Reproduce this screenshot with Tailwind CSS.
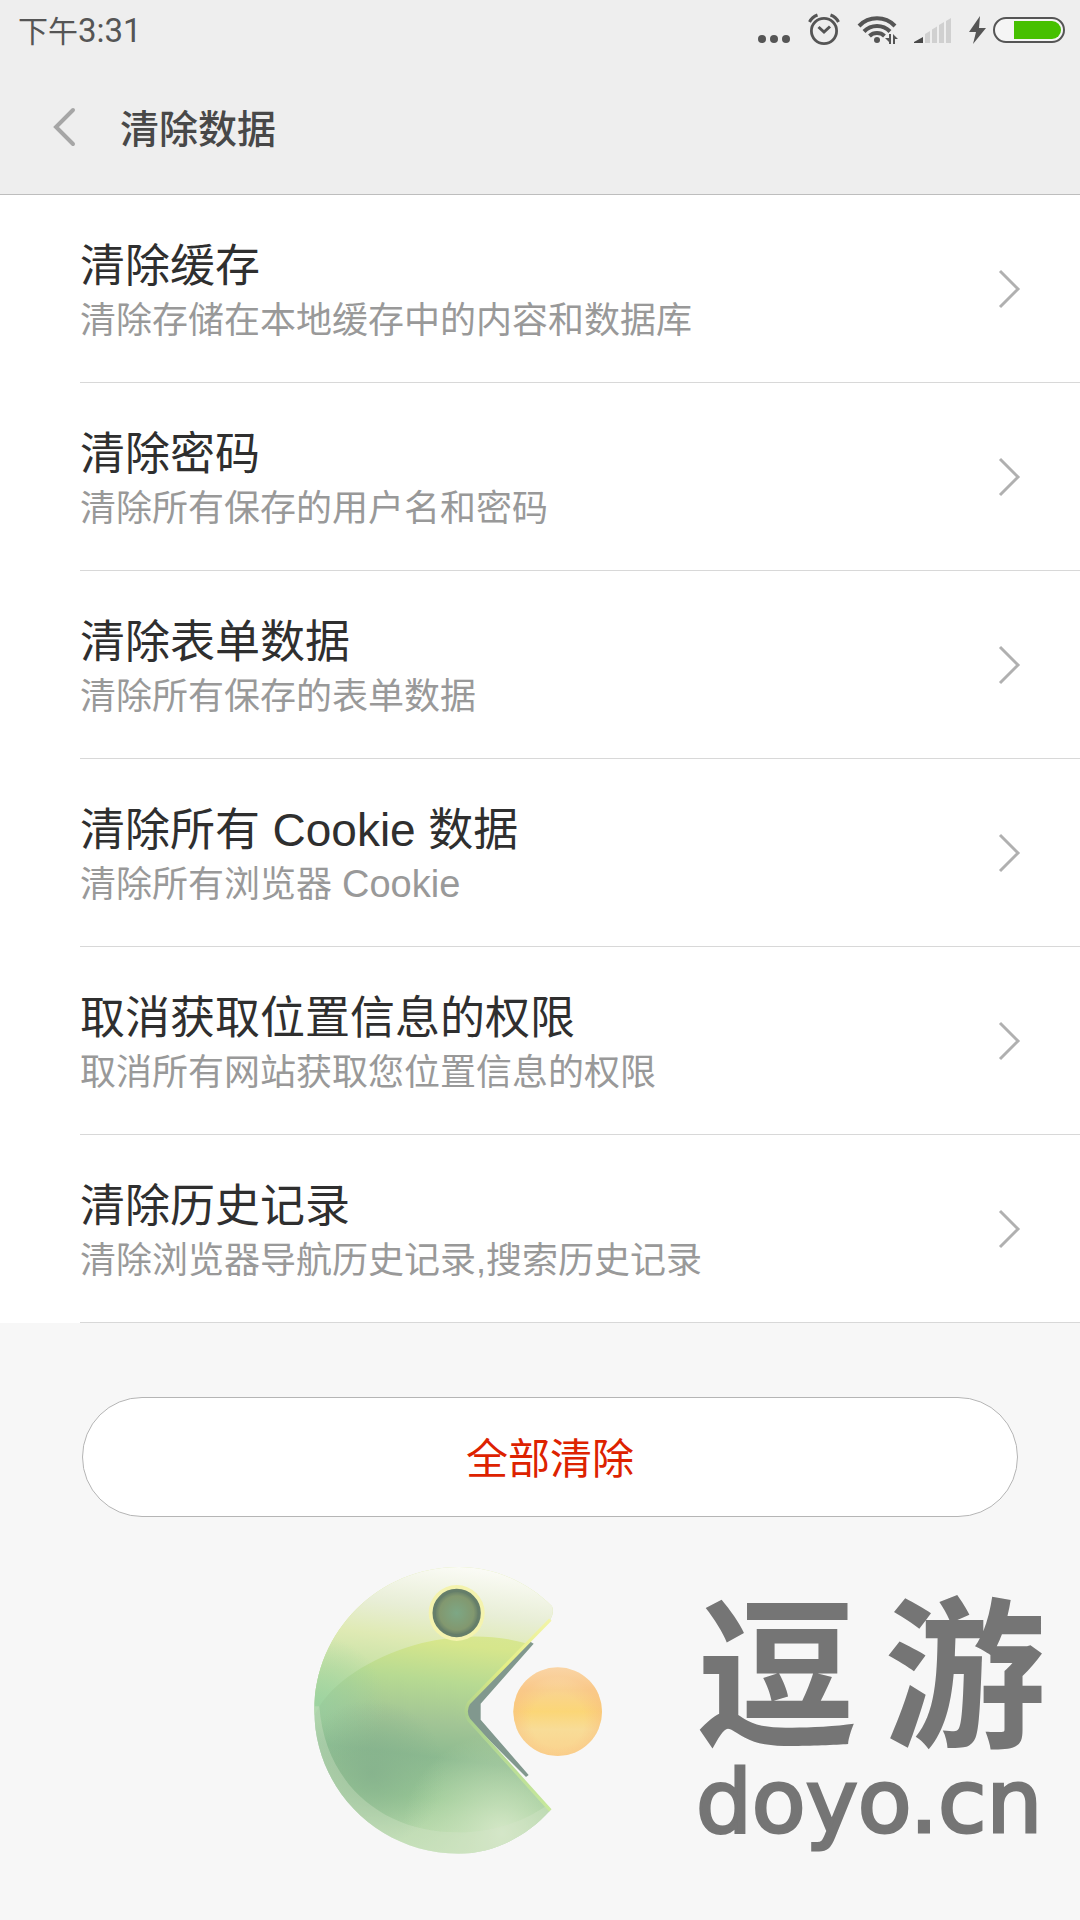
<!DOCTYPE html>
<html lang="zh-CN">
  <head>
    <meta charset="UTF-8" />
    <meta name="viewport" content="width=device-width, initial-scale=1.0" />
    <title>清除数据</title>
    <script src="https://cdn.jsdelivr.net/npm/@tailwindcss/browser@4"></script>
  </head>
  <body
    class="min-h-screen bg-[#f7f7f7] font-['Liberation_Sans','Noto_Sans_CJK_SC',sans-serif] text-[#2f2f2f]"
  >
    <header class="bg-[#eeeeee] border-b border-[#bdbdbd]">
      <!-- Status bar -->
      <div class="flex items-center justify-between h-[60px] pl-[18px] pr-3">
        <p class="pt-[2px] text-[30px] leading-[60px] text-[#555555]">
          下午<span class="font-[Roboto] text-[33px]">3:31</span>
        </p>

        <div class="flex gap-[14px] text-[#555555]">
          <svg width="36" height="60" viewBox="0 0 36 60" fill="currentColor">
            <circle cx="6" cy="39" r="4" />
            <circle cx="18" cy="39" r="4" />
            <circle cx="30" cy="39" r="4" />
          </svg>

          <svg
            width="36"
            height="60"
            viewBox="0 0 36 60"
            fill="none"
            stroke="currentColor"
            stroke-width="3"
          >
            <circle cx="18" cy="31" r="12.6" stroke-width="2.8" />
            <path d="M3.5 22Q6 17 11.5 15M32.5 22Q30 17 24.5 15" />
            <path d="M12.5 27L18 32L24 26.5" />
          </svg>

          <svg
            width="42"
            height="60"
            viewBox="0 0 42 60"
            fill="none"
            stroke="currentColor"
            stroke-width="4"
          >
            <path d="M3 26A25 25 0 0 1 39 26" />
            <path d="M8 31.5A18 18 0 0 1 34 31.5" />
            <path d="M13.5 36A11 11 0 0 1 28.5 36" />
            <circle cx="21" cy="40" r="3" fill="currentColor" stroke="none" />
            <path
              d="M33 34h2v10h-2v-2l-4-4h4zM37 34l5 5h-3v5h-2z"
              fill="currentColor"
              stroke="none"
            />
          </svg>

          <svg width="40" height="60" viewBox="0 0 40 60" fill="#d0d0d0">
            <path d="M2 43v-1l9-5v6z" fill="#484848" />
            <path
              d="M13 43V34l5-3v12zM20 43V29.5l5-3V43zM27 43V25l5-3v21zM34 43V21l5-3v25z"
            />
          </svg>

          <svg width="102" height="60" viewBox="0 0 102 60">
            <path d="M14 16L3 32h7L7 44L20 28h-7z" fill="currentColor" />
            <rect
              x="28"
              y="18"
              width="70"
              height="24"
              rx="12"
              fill="#f5f5f5"
              stroke="currentColor"
              stroke-width="2"
            />
            <path d="M48 21h38a9 9 0 0 1 0 18H48z" fill="#46c001" />
          </svg>
        </div>
      </div>

      <!-- Title bar -->
      <div class="flex items-center gap-[43px] h-[134px] pl-[52px]">
        <button type="button" aria-label="返回">
          <svg
            width="25"
            height="42"
            viewBox="0 0 25 42"
            fill="none"
            stroke="#a6a6a6"
            stroke-width="4"
            stroke-linecap="round"
          >
            <path d="M21 4L4 21L21 38" />
          </svg>
        </button>
        <h1 class="pt-[6px] text-[39px] leading-[60px] font-medium text-[#484848]">
          清除数据
        </h1>
      </div>
    </header>

    <main>
      <ul class="bg-white pl-20">
        <li class="border-b border-[#d8d8d8]">
          <a href="#cache" class="flex items-center justify-between h-[187px] pr-[58px]">
            <div class="pt-1">
              <h2 class="text-[45px] leading-[60px]">清除缓存</h2>
              <p class="text-[36px] leading-[48px] text-[#999999]">
                清除存储在本地缓存中的内容和数据库
              </p>
            </div>
            <svg width="24" height="40" viewBox="0 0 24 40" fill="none" stroke="#b0b0b0" stroke-width="3">
              <path d="M2 2L20 20L2 38" />
            </svg>
          </a>
        </li>

        <li class="border-b border-[#d8d8d8]">
          <a href="#password" class="flex items-center justify-between h-[187px] pr-[58px]">
            <div class="pt-1">
              <h2 class="text-[45px] leading-[60px]">清除密码</h2>
              <p class="text-[36px] leading-[48px] text-[#999999]">
                清除所有保存的用户名和密码
              </p>
            </div>
            <svg width="24" height="40" viewBox="0 0 24 40" fill="none" stroke="#b0b0b0" stroke-width="3">
              <path d="M2 2L20 20L2 38" />
            </svg>
          </a>
        </li>

        <li class="border-b border-[#d8d8d8]">
          <a href="#form" class="flex items-center justify-between h-[187px] pr-[58px]">
            <div class="pt-1">
              <h2 class="text-[45px] leading-[60px]">清除表单数据</h2>
              <p class="text-[36px] leading-[48px] text-[#999999]">
                清除所有保存的表单数据
              </p>
            </div>
            <svg width="24" height="40" viewBox="0 0 24 40" fill="none" stroke="#b0b0b0" stroke-width="3">
              <path d="M2 2L20 20L2 38" />
            </svg>
          </a>
        </li>

        <li class="border-b border-[#d8d8d8]">
          <a href="#cookie" class="flex items-center justify-between h-[187px] pr-[58px]">
            <div class="pt-1">
              <h2 class="text-[45px] leading-[60px]">
                清除所有 <span class="text-[46px] leading-none">Cookie</span> 数据
              </h2>
              <p class="text-[36px] leading-[48px] text-[#999999]">
                清除所有浏览器 <span class="text-[38px] leading-none">Cookie</span>
              </p>
            </div>
            <svg width="24" height="40" viewBox="0 0 24 40" fill="none" stroke="#b0b0b0" stroke-width="3">
              <path d="M2 2L20 20L2 38" />
            </svg>
          </a>
        </li>

        <li class="border-b border-[#d8d8d8]">
          <a href="#location" class="flex items-center justify-between h-[187px] pr-[58px]">
            <div class="pt-1">
              <h2 class="text-[45px] leading-[60px]">取消获取位置信息的权限</h2>
              <p class="text-[36px] leading-[48px] text-[#999999]">
                取消所有网站获取您位置信息的权限
              </p>
            </div>
            <svg width="24" height="40" viewBox="0 0 24 40" fill="none" stroke="#b0b0b0" stroke-width="3">
              <path d="M2 2L20 20L2 38" />
            </svg>
          </a>
        </li>

        <li class="border-b border-[#d8d8d8]">
          <a href="#history" class="flex items-center justify-between h-[187px] pr-[58px]">
            <div class="pt-1">
              <h2 class="text-[45px] leading-[60px]">清除历史记录</h2>
              <p class="text-[36px] leading-[48px] text-[#999999]">
                清除浏览器导航历史记录,搜索历史记录
              </p>
            </div>
            <svg width="24" height="40" viewBox="0 0 24 40" fill="none" stroke="#b0b0b0" stroke-width="3">
              <path d="M2 2L20 20L2 38" />
            </svg>
          </a>
        </li>
      </ul>

      <div class="pt-[74px] pl-[82px] pr-[62px]">
        <button
          type="button"
          class="block w-full h-[120px] pt-1 rounded-full border border-[#b5b5b5] bg-white text-[42px] text-[#dd2200]"
        >
          全部清除
        </button>
      </div>
    </main>

    <footer class="flex justify-end gap-[90px] pt-[46px] pr-[34px]">
      <svg width="294" height="294" viewBox="70 70 882 882">
        <defs>
          <linearGradient id="body" x1="0.55" y1="0" x2="0.45" y2="1">
            <stop offset="0" stop-color="#dce9a8" />
            <stop offset="0.27" stop-color="#d6e68c" />
            <stop offset="0.4" stop-color="#b7da92" />
            <stop offset="0.54" stop-color="#a2c595" />
            <stop offset="0.66" stop-color="#8cba90" />
            <stop offset="0.8" stop-color="#9ac996" />
            <stop offset="0.92" stop-color="#b5d8aa" />
            <stop offset="1" stop-color="#bfdfb3" />
          </linearGradient>
          <linearGradient id="gloss" x1="0.6" y1="0" x2="0.4" y2="1">
            <stop offset="0" stop-color="#fcfcf8" />
            <stop offset="0.3" stop-color="#e8eed6" />
            <stop offset="0.5" stop-color="#dfeab4" />
            <stop offset="0.75" stop-color="#c4e0a4" />
            <stop offset="1" stop-color="#acd9a0" />
          </linearGradient>
          <radialGradient id="left" cx="90" cy="490" r="200" gradientUnits="userSpaceOnUse">
            <stop offset="0" stop-color="#96d0a0" stop-opacity="0.7" />
            <stop offset="1" stop-color="#96d0a0" stop-opacity="0" />
          </radialGradient>
          <radialGradient id="shade" cx="250" cy="700" r="220" gradientUnits="userSpaceOnUse">
            <stop offset="0" stop-color="#84b08c" stop-opacity="0.8" />
            <stop offset="1" stop-color="#84b08c" stop-opacity="0" />
          </radialGradient>
          <radialGradient id="glow" cx="640" cy="880" r="300" gradientUnits="userSpaceOnUse">
            <stop offset="0" stop-color="#d8e9cb" stop-opacity="0.9" />
            <stop offset="1" stop-color="#cbe3b8" stop-opacity="0" />
          </radialGradient>
          <linearGradient id="lip" x1="0" y1="0" x2="0" y2="1">
            <stop offset="0" stop-color="#f2f4a8" />
            <stop offset="0.25" stop-color="#e4ee84" />
            <stop offset="0.5" stop-color="#a9cf8d" />
            <stop offset="1" stop-color="#c8e99c" />
          </linearGradient>
          <radialGradient id="eye">
            <stop offset="0" stop-color="#7da785" />
            <stop offset="0.75" stop-color="#82986f" />
            <stop offset="1" stop-color="#617a68" />
          </radialGradient>
          <linearGradient id="ball" x1="0" y1="0" x2="0" y2="1">
            <stop offset="0" stop-color="#fbeccb" />
            <stop offset="0.25" stop-color="#f9d391" />
            <stop offset="0.5" stop-color="#fbd677" />
            <stop offset="0.7" stop-color="#f8dc97" />
            <stop offset="1" stop-color="#fad28d" />
          </linearGradient>
          <radialGradient id="ballEdge" cy="0.6">
            <stop offset="0.6" stop-color="#f9bd80" stop-opacity="0" />
            <stop offset="1" stop-color="#f9bd80" stop-opacity="0.5" />
          </radialGradient>
          <clipPath id="shape">
            <path
              d="M790 200C715 125 615 82 510 82C270 82 77 275 77 512C77 750 270 942 510 942C615 942 715 890 785 812L540 540Q525 515 540 490L785 240Q797 220 790 200Z"
            />
          </clipPath>
        </defs>

        <path
          d="M725 306L735 312L576 492V540L720 706L712 712L530 530V500Z"
          fill="#81988e"
        />
        <g clip-path="url(#shape)">
          <rect x="70" y="70" width="740" height="882" fill="url(#body)" />
          <path
            d="M70 70H810V350C690 285 540 275 400 310C270 345 150 410 92 500L70 540Z"
            fill="url(#gloss)"
          />
          <rect x="70" y="70" width="740" height="882" fill="url(#left)" />
          <rect x="70" y="70" width="740" height="882" fill="url(#shade)" />
          <rect x="70" y="70" width="740" height="882" fill="url(#glow)" />
          <path
            d="M92 500C110 740 290 880 510 878C620 876 710 845 785 790V952H70V500Z"
            fill="#d7e6ca"
            fill-opacity="0.35"
          />
        </g>
        <path
          d="M785 240L540 490Q525 515 540 540L785 812"
          fill="none"
          stroke="url(#lip)"
          stroke-width="10"
        />
        <circle cx="504" cy="220" r="84" fill="#f4f3ae" />
        <circle cx="504" cy="220" r="68" fill="url(#eye)" stroke="#657e6a" stroke-width="9" />
        <circle cx="807" cy="516" r="133" fill="url(#ball)" />
        <circle cx="807" cy="516" r="133" fill="url(#ballEdge)" />
      </svg>

      <div class="w-[350px] text-[#757575]">
        <p
          class="flex justify-between pt-[34px] text-[162px] leading-[164px] font-bold"
        >
          <span>逗</span><span>游</span>
        </p>
        <p
          class="font-['DejaVu_Sans'] text-[88px] leading-[82px] [-webkit-text-stroke:3px_#757575]"
        >
          doyo.cn
        </p>
      </div>
    </footer>
  </body>
</html>
